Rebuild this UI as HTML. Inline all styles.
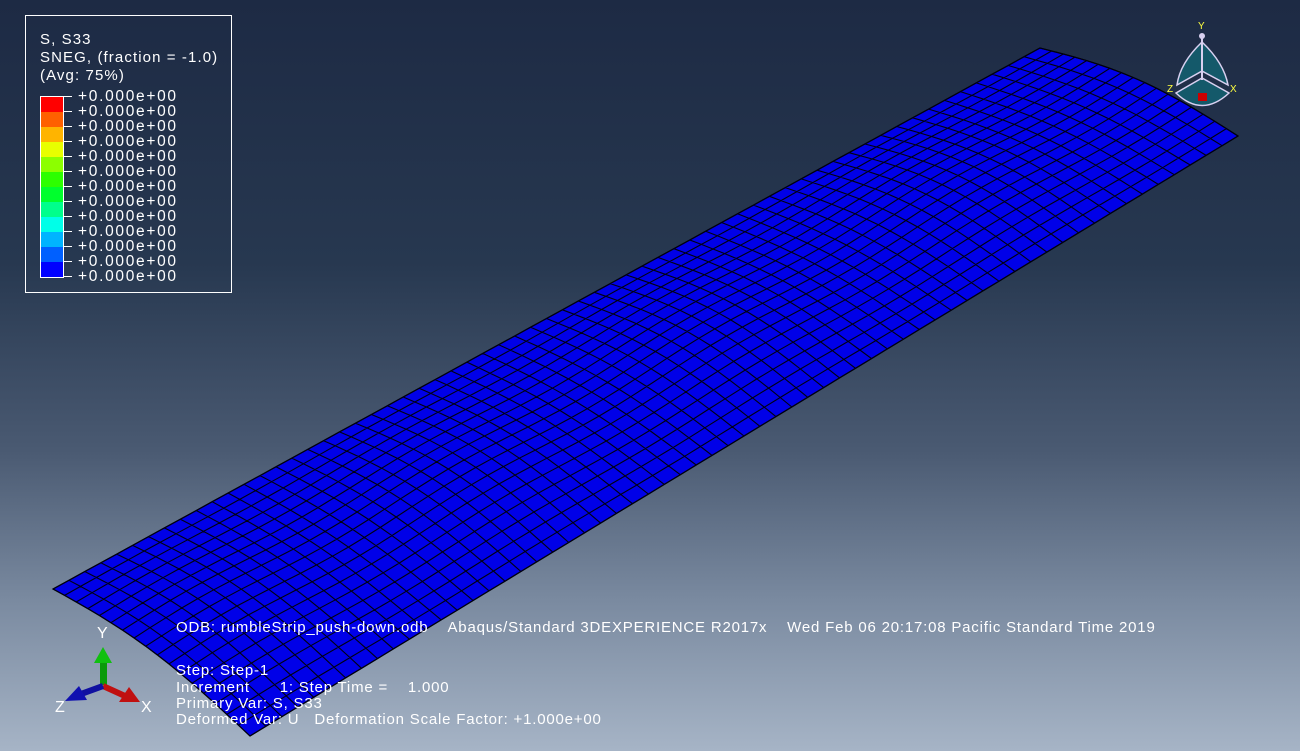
<!DOCTYPE html>
<html><head><meta charset="utf-8"><style>
html,body{margin:0;padding:0}
body{width:1300px;height:751px;overflow:hidden;position:relative;background:linear-gradient(180deg,#1d2a44 0%,#273850 35%,#4a5a72 60%,#7a8aa0 80%,#a6b4c6 100%);font-family:"Liberation Sans","DejaVu Sans",sans-serif;color:#fff}
.t{position:absolute;font-size:15px;line-height:16px;white-space:pre;color:#fff;letter-spacing:0.8px}
.l{letter-spacing:1.7px;font-size:15.5px}
#legend{position:absolute;left:25px;top:15px;width:205px;height:276px;border:1px solid #fff}
.sw{position:absolute;left:40px;width:23px;height:15px}
.tk{position:absolute;left:63px;width:9px;height:1px;background:#fff}
</style></head><body>
<svg id="mesh" width="1300" height="751" style="position:absolute;left:0;top:0"></svg>
<div id="legend"></div>
<div class="t" style="left:40px;top:32px;letter-spacing:1.1px">S, S33</div>
<div class="t" style="left:40px;top:50px;letter-spacing:1.1px">SNEG, (fraction = -1.0)</div>
<div class="t" style="left:40px;top:68px;letter-spacing:1.1px">(Avg: 75%)</div>
<div id="scale"></div>
<div class="t" style="left:176px;top:620px">ODB: rumbleStrip_push-down.odb    Abaqus/Standard 3DEXPERIENCE R2017x    Wed Feb 06 20:17:08 Pacific Standard Time 2019</div>
<div class="t" style="left:176px;top:663px">Step: Step-1</div>
<div class="t" style="left:176px;top:680px">Increment      1: Step Time =    1.000</div>
<div class="t" style="left:176px;top:696px">Primary Var: S, S33</div>
<div class="t" style="left:176px;top:712px">Deformed Var: U   Deformation Scale Factor: +1.000e+00</div>
<svg width="140" height="110" style="position:absolute;left:45px;top:620px">
<text x="52" y="18" fill="#fff" font-size="16" font-family="Liberation Sans">Y</text>
<text x="10" y="92" fill="#fff" font-size="16" font-family="Liberation Sans">Z</text>
<text x="96" y="92" fill="#fff" font-size="16" font-family="Liberation Sans">X</text>
<rect x="55" y="40" width="7" height="25" fill="#0a9a0a"/>
<polygon points="58,27 49,43 67,43" fill="#10c010"/>
<line x1="58" y1="66" x2="80" y2="76" stroke="#c01010" stroke-width="6"/>
<polygon points="95,82 74,82 84,67" fill="#c01010"/>
<line x1="58" y1="66" x2="36" y2="74" stroke="#1010a0" stroke-width="6"/>
<polygon points="20,81 34,66 42,80" fill="#1010b0"/>
</svg>
<svg width="90" height="100" style="position:absolute;left:1160px;top:18px">
<text x="38" y="11" fill="#ffff40" font-size="10" font-family="Liberation Sans">Y</text>
<text x="7" y="74" fill="#ffff40" font-size="10" font-family="Liberation Sans">Z</text>
<text x="70" y="74" fill="#ffff40" font-size="10" font-family="Liberation Sans">X</text>
<path d="M42,24 Q20,45 17,67 L42,53 Z" fill="#14596a" stroke="#d8d0f0" stroke-width="1.5"/>
<path d="M42,24 Q64,45 68,67 L42,53 Z" fill="#14596a" stroke="#d8d0f0" stroke-width="1.5"/>
<path d="M16,75 L42,60 L69,75 Q42,100 16,75 Z" fill="#14596a" stroke="#d8d0f0" stroke-width="1.5"/>
<line x1="42" y1="18" x2="42" y2="62" stroke="#d8d0f0" stroke-width="2"/>
<circle cx="42" cy="18" r="3" fill="#d8d0f0"/>
<rect x="38" y="75" width="9" height="8" fill="#cc0000"/>
</svg>
<script>
var cols=["#ff0000","#ff6000","#ffb400","#e8ff00","#8cff00","#2dff00","#00ff2d","#00ff8c","#00ffe8","#00b4ff","#0060ff","#0000ff"];
var s="";
for(var i=0;i<12;i++){s+='<div class="sw" style="top:'+(97+i*15)+'px;background:'+cols[i]+'"></div>';}
s+='<div style="position:absolute;left:40px;top:96px;width:22px;height:180px;border:1px solid #fff"></div>';
for(var i=0;i<13;i++){s+='<div class="tk" style="top:'+(96+i*15)+'px"></div><div class="t l" style="left:78px;top:'+(89+i*15)+'px">+0.000e+00</div>';}
document.getElementById('scale').innerHTML=s;
var A=[53,589],B=[250,736],C=[1238,136],D=[1040,48];
function P(u,v){var x=(1-u)*(1-v)*A[0]+(1-u)*v*B[0]+u*v*C[0]+u*(1-v)*D[0];
var y=(1-u)*(1-v)*A[1]+(1-u)*v*B[1]+u*v*C[1]+u*(1-v)*D[1];
y-=12*Math.sin(Math.PI*v)*(1+0.25*Math.sin(u*Math.PI*8));return [x.toFixed(1),y.toFixed(1)];}
var NU=62,NV=17,g="";
var pts=[];for(var i=0;i<=NU;i++)pts.push(P(i/NU,0));for(var j=0;j<=NV;j++)pts.push(P(1,j/NV));
for(var i=NU;i>=0;i--)pts.push(P(i/NU,1));for(var j=NV;j>=0;j--)pts.push(P(0,j/NV));
g+='<polygon points="'+pts.map(function(p){return p.join(",")}).join(" ")+'" fill="#0000e8" stroke="#000" stroke-width="1.2"/>';
var d="";
for(var i=0;i<=NU;i++){for(var j=0;j<=NV;j++){var p=P(i/NU,j/NV);d+=(j?"L":"M")+p[0]+","+p[1];}}
for(var j=0;j<=NV;j++){for(var i=0;i<=NU;i++){var p=P(i/NU,j/NV);d+=(i?"L":"M")+p[0]+","+p[1];}}
g+='<path d="'+d+'" fill="none" stroke="#000010" stroke-width="1.1"/>';
document.getElementById('mesh').innerHTML=g;
</script>
</body></html>
